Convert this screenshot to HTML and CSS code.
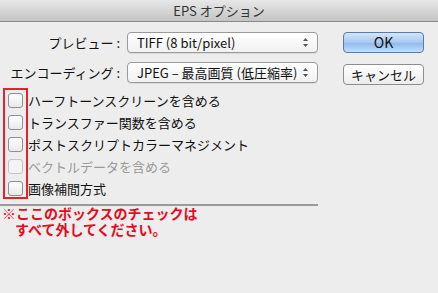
FILE: index.html
```html
<!DOCTYPE html>
<html lang="ja">
<head>
  <meta charset="UTF-8" />
  <title>EPS オプション</title>
  <link rel="stylesheet" href="styles.css">
</head>
<body>
  <div class="dialog">
    <div class="titlebar">EPS オプション</div>

    <div class="top">
      <div class="fields">
        <div class="field">
          <span class="field-label">プレビュー :</span>
          <div class="popup">
            <span>TIFF (8 bit/pixel)</span>
            <svg class="arrows" width="7" height="11" viewBox="0 0 7 11">
              <path d="M3.5 1 L6 4 H1 Z M3.5 10 L6 7 H1 Z" fill="#555"/>
            </svg>
          </div>
        </div>
        <div class="field">
          <span class="field-label">エンコーディング :</span>
          <div class="popup">
            <span>JPEG – 最高画質 (低圧縮率)</span>
            <svg class="arrows" width="7" height="11" viewBox="0 0 7 11">
              <path d="M3.5 1 L6 4 H1 Z M3.5 10 L6 7 H1 Z" fill="#555"/>
            </svg>
          </div>
        </div>
      </div>
      <div class="buttons">
        <div class="btn btn-default">OK</div>
        <div class="btn">キャンセル</div>
      </div>
    </div>

    <div class="checks">
      <div class="highlight"></div>
      <label class="check"><span class="box"></span>ハーフトーンスクリーンを含める</label>
      <label class="check"><span class="box"></span>トランスファー関数を含める</label>
      <label class="check"><span class="box"></span>ポストスクリプトカラーマネジメント</label>
      <label class="check disabled"><span class="box"></span>ベクトルデータを含める</label>
      <label class="check"><span class="box"></span>画像補間方式</label>
    </div>

    <div class="separator"></div>

    <div class="note">
      <div>※ここのボックスのチェックは</div>
      <div class="indent">すべて外してください。</div>
    </div>
  </div>
</body>
</html>
```

FILE: styles.css
```css
body {
  margin: 0;
  background: #ededed;
  font-family: 'Noto Sans CJK JP', 'Noto Sans', sans-serif;
  font-size: 13px;
  color: #111;
}

.dialog {
  width: 438px;
  height: 293px;
  background: #ededed;
  overflow: hidden;
}

.titlebar {
  height: 21px;
  line-height: 21px;
  text-align: center;
  font-size: 13px;
  color: #333;
  background: linear-gradient(#e8e8e8, #c4c4c4);
  border-bottom: 1px solid #8a8a8a;
}

.top {
  display: flex;
  padding-top: 10px;
}

.fields {
  display: flex;
  flex-direction: column;
  gap: 9px;
}

.field {
  display: flex;
  align-items: center;
  height: 21px;
}

.field-label {
  width: 120px;
  text-align: right;
  padding-right: 7px;
  white-space: nowrap;
}

.popup {
  width: 191px;
  height: 21px;
  box-sizing: border-box;
  display: flex;
  align-items: center;
  justify-content: space-between;
  padding: 0 8px 0 9px;
  background: linear-gradient(#ffffff, #f1f1f1);
  border: 1px solid #9a9a9a;
  border-radius: 4px;
  box-shadow: 0 1px 0 rgba(0, 0, 0, 0.08);
  white-space: nowrap;
}

.buttons {
  display: flex;
  flex-direction: column;
  gap: 11px;
  margin-left: 25px;
}

.btn {
  width: 81px;
  height: 21px;
  box-sizing: border-box;
  border: 1px solid #8e8e8e;
  border-radius: 4px;
  background: linear-gradient(#ffffff, #ececec);
  text-align: center;
  line-height: 19px;
  white-space: nowrap;
}

.btn-default {
  font-size: 14px;
  border-color: #5a7aa8;
  background: linear-gradient(#d5e6fb, #a6c8f1 50%, #8fb8ed 51%, #c4ddfa);
}

/* checkbox list with the red marker box drawn over it */
.checks {
  position: relative;
  display: flex;
  flex-direction: column;
  padding-top: 4px;
}

.highlight {
  position: absolute;
  left: 3px;
  top: 3px;
  width: 21px;
  height: 107px;
  border: 2px solid #e3222f;
}

.check {
  display: flex;
  align-items: center;
  height: 22px;
  white-space: nowrap;
}

.box {
  width: 13px;
  height: 13px;
  margin: 0 5px 0 8px;
  border: 1px solid #8f8f8f;
  border-radius: 3px;
  background: linear-gradient(#ffffff, #e9e9e9);
  flex-shrink: 0;
}

.check.disabled {
  color: #9a9a9a;
}

.check.disabled .box {
  border-color: #c4c4c4;
  background: #f3f3f3;
}

.separator {
  width: 318px;
  height: 0;
  border-top: 2px solid #9b9b9b;
  margin-top: 5px;
}

.note {
  margin: -1px 0 0 2px;
  color: #e60a20;
  font-weight: bold;
  font-size: 14px;
}

.note div {
  height: 16px;
  line-height: 16px;
  white-space: nowrap;
}

.note .indent {
  padding-left: 13px;
}
```
